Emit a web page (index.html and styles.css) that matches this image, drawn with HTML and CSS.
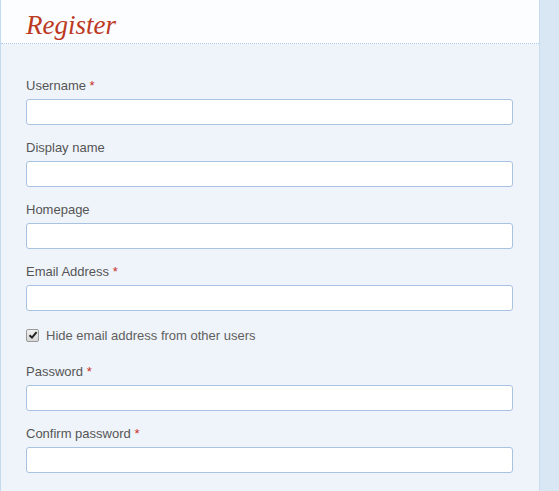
FILE: index.html
```html
<!DOCTYPE html>
<html>
<head>
<meta charset="utf-8">
<link rel="stylesheet" href="styles.css">
</head>
<body>
<div class="panel">
  <div class="header"><h1 class="title">Register</h1></div>
  <form class="form">
    <div class="field">
      <label class="label">Username <span class="req">*</span></label>
      <input class="input" type="text">
    </div>
    <div class="field">
      <label class="label">Display name</label>
      <input class="input" type="text">
    </div>
    <div class="field">
      <label class="label">Homepage</label>
      <input class="input" type="text">
    </div>
    <div class="field">
      <label class="label">Email Address <span class="req">*</span></label>
      <input class="input" type="text">
    </div>
    <div class="check">
      <span class="cb"><svg class="tick" viewBox="0 0 10 10" width="10" height="10"><path d="M1.5 5.2 L4 7.6 L8.6 2.2" fill="none" stroke="#222" stroke-width="2"/></svg></span>
      <span class="check-text">Hide email address from other users</span>
    </div>
    <div class="field">
      <label class="label">Password <span class="req">*</span></label>
      <input class="input" type="password">
    </div>
    <div class="field">
      <label class="label">Confirm password <span class="req">*</span></label>
      <input class="input" type="password">
    </div>
    <div class="field">
      <label class="label">Are you human? <span class="req">*</span></label>
      <input class="input" type="text">
    </div>
  </form>
</div>
</body>
</html>
```
FILE: styles.css
```css
html, body {
  margin: 0;
  padding: 0;
  background: #d9e7f5;
  height: 100%;
  overflow: hidden;
}
.panel {
  width: 538px;
  min-height: 100%;
  background: #eff4fa;
  border-left: 1px solid #c4d8ee;
  border-right: 1px solid #c8dbef;
  font-family: "Liberation Sans", Arial, sans-serif;
}
.header {
  height: 44px;
  background: #fbfdff;
  border-bottom: 1px dotted #a9cdef;
  box-sizing: border-box;
  padding-left: 25px;
}
.title {
  margin: 0;
  font-family: "Liberation Serif", "Times New Roman", serif;
  font-style: italic;
  font-weight: normal;
  font-size: 27px;
  line-height: 50px;
  color: #bc3a1f;
}
.form {
  padding: 34px 0 0 25px;
  display: flex;
  flex-direction: column;
  gap: 15px;
}
.field {
  display: flex;
  flex-direction: column;
  gap: 5px;
}
.label {
  font-size: 13px;
  line-height: 16px;
  color: #555;
}
.req {
  color: #c8322a;
}
.input {
  width: 487px;
  height: 26px;
  box-sizing: border-box;
  margin: 0;
  border: 1px solid #a8c3e2;
  border-radius: 3px;
  background: #fff;
}
.check {
  display: flex;
  align-items: center;
  gap: 7px;
  height: 22px;
  margin-top: -2px;
  margin-bottom: 3px;
}
.cb {
  width: 11px;
  height: 11px;
  border: 1px solid #9a9a9a;
  border-radius: 2px;
  background: linear-gradient(#f0f0f0, #d6d6d6);
  display: flex;
  align-items: center;
  justify-content: center;
}
.tick {
  display: block;
}
.check-text {
  font-size: 13px;
  color: #5f5f5f;
}
```
